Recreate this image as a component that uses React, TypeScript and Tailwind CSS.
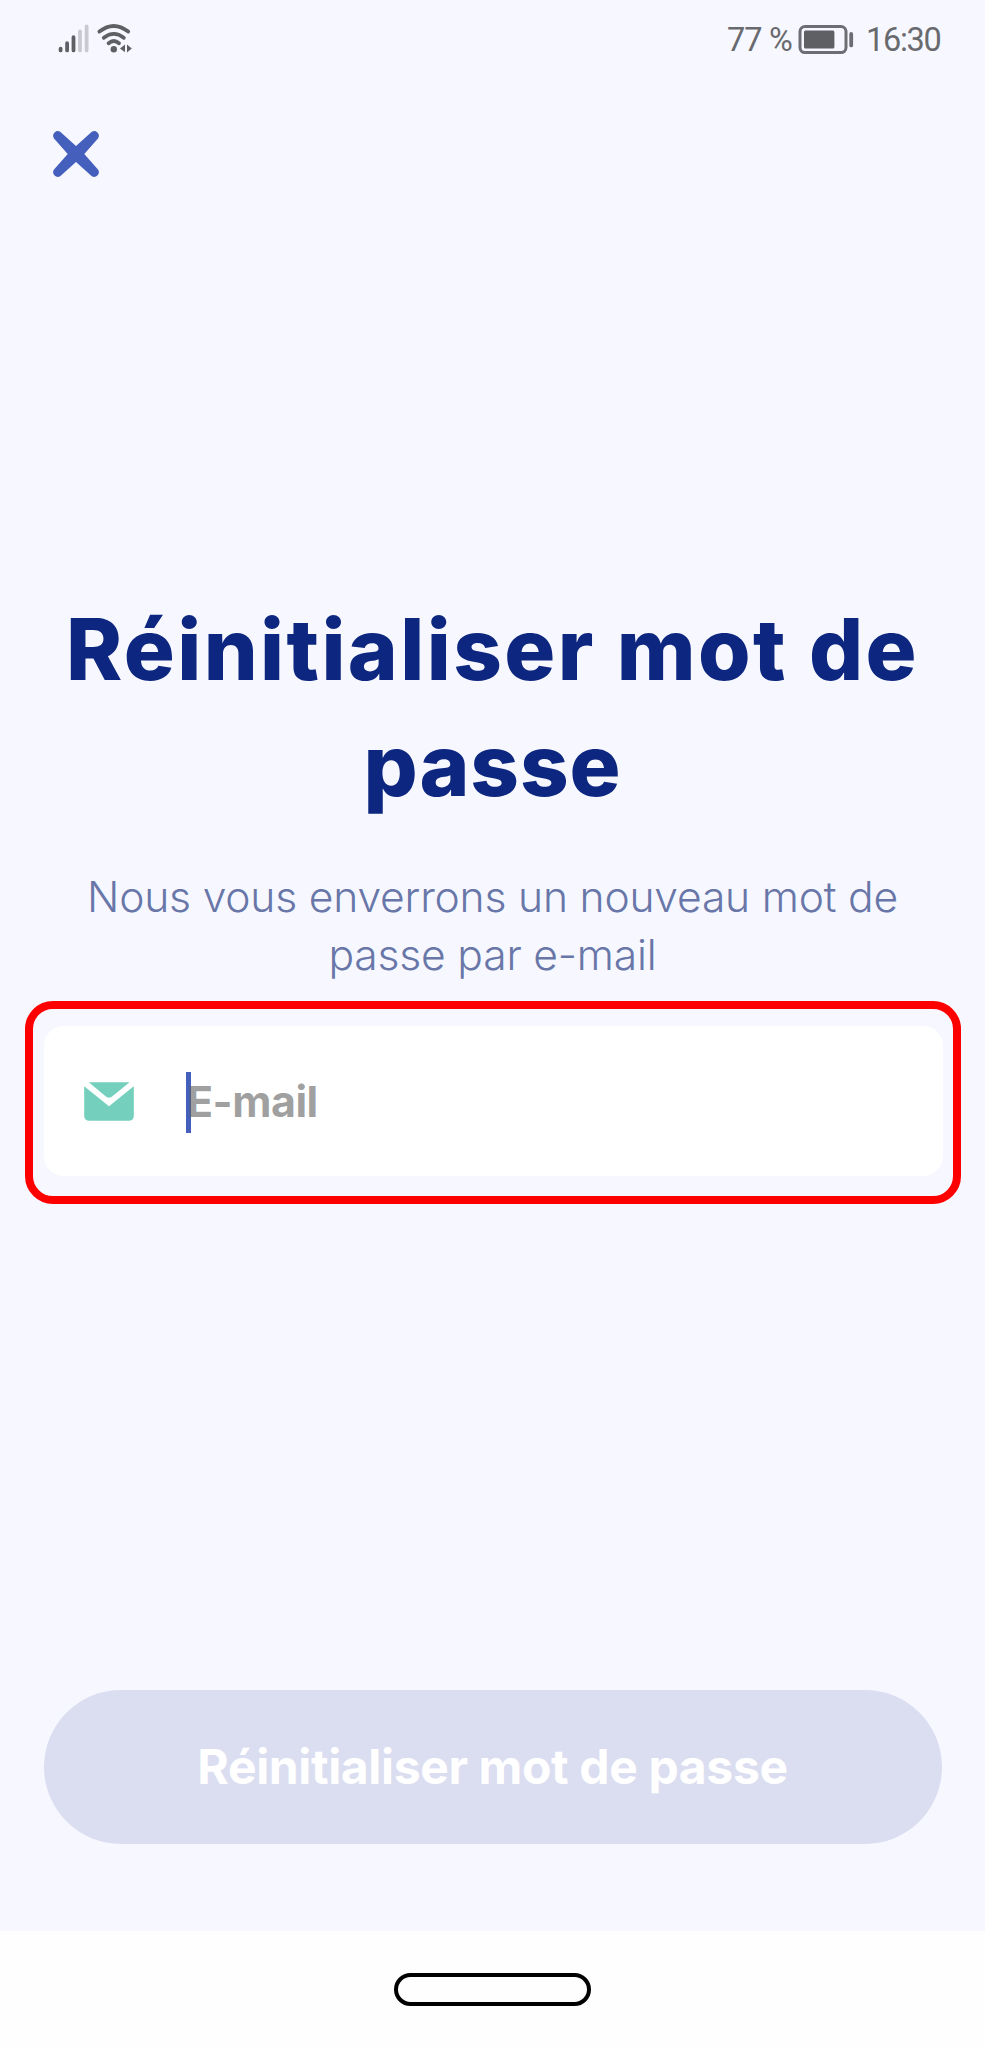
function SignalIcon() {
  return (
    <svg className="h-[60px] w-[96px]" viewBox="40 10 96 60" fill="none" strokeLinecap="round">
      <g stroke="#5f6064" strokeWidth="3.8">
        <path d="M60.6 48.6V50.4M67.1 43.2V50.4M73.5 37.2V50.4" />
        <path d="M80 31.4V50.4M86.6 26.4V50.4" stroke="#c9cad0" />
      </g>
      <g stroke="#5f6064" strokeWidth="3.8">
        <path d="M99.4 31.6Q113.7 20.4 128.2 31.6" />
        <path d="M103.8 37.8Q113.8 30 123.8 37.8" />
        <path d="M108.6 43.2Q113.8 38.8 119 43.2" />
      </g>
      <circle cx="113.8" cy="49.2" r="3.2" fill="#5f6064" />
      <path d="M120 48.6L125 44.6V52.2ZM131.8 48.4L127 44.6V52.4Z" fill="#5f6064" />
    </svg>
  );
}

function BatteryIcon() {
  return (
    <svg className="h-[32px] w-[58px]" viewBox="798 22 58 32" fill="none">
      <rect x="801" y="25.6" width="46" height="26" rx="5" stroke="#6d6e73" strokeWidth="3" />
      <rect x="805" y="29.6" width="30.4" height="18" rx="1.5" fill="#5f6064" />
      <path d="M852.2 33V44.4" stroke="#6d6e73" strokeWidth="3.8" strokeLinecap="round" />
    </svg>
  );
}

function CloseIcon() {
  return (
    <svg className="size-[48px]" viewBox="-24 -24 48 48" fill="#455fbd">
      <path d="M0-8L15.8-22.2A4.7 4.7 0 0 1 22.2-15.8L8.3 0L22.2 15.8A4.7 4.7 0 0 1 15.8 22.2L0 8L-15.8 22.2A4.7 4.7 0 0 1-22.2 15.8L-8.3 0L-22.2-15.8A4.7 4.7 0 0 1-15.8-22.2Z" />
    </svg>
  );
}

function MailIcon() {
  return (
    <svg className="h-[39px] w-[50px]" viewBox="0 0 50 39" fill="#74d0bd">
      <path d="M4.8 0.3H45.6L29 13.8Q25 17.8 21 13.8Z" />
      <path d="M0.2 4.2L25 24.2L49.8 4.2V33.5Q49.8 38.8 44.5 38.8H5.5Q0.2 38.8 0.2 33.5Z" />
    </svg>
  );
}

export default function App() {
  return (
    <div className="flex h-[2048px] w-[985px] flex-col bg-[#f7f8ff] font-['Inter',sans-serif]">
      <header className="flex h-[80px] shrink-0 items-start justify-between pr-[43px] pl-[40px] pt-[10px]">
        <SignalIcon />
        <div className="mt-[9px] flex h-10 items-center font-['Roboto',sans-serif] text-[32.5px] whitespace-nowrap text-[#696a6e]">
          <span className="mt-[2px] w-[70px] tracking-[-0.9px]">77 %</span>
          <BatteryIcon />
          <span className="mt-[2px] ml-[11px] w-[76px] tracking-[-1.3px]">16:30</span>
        </div>
      </header>
      <button className="mt-[50px] ml-[52px] size-[48px] shrink-0" aria-label="Fermer">
        <CloseIcon />
      </button>

      <main className="flex flex-col px-[25px] pt-[414px]">
        <h1 className="text-center text-[85px] leading-[116px] font-extrabold text-[#0d267f]">
          <span className="tracking-[2.4px]">Réinitialiser mot de</span>
          <br />
          <span className="tracking-[0.9px]">passe</span>
        </h1>
        <p className="mt-[44px] text-center text-[42.6px] leading-[58px] font-light tracking-[-0.2px] text-[#6876a8]">
          Nous vous enverrons un nouveau mot de<br />passe par e-mail
        </p>
        <div className="mt-[17px] h-[203px] w-[936px] rounded-[28px] border-8 border-[#ff0000] px-[10.5px] pt-[17px]">
          <label className="flex h-[150px] items-center rounded-[20px] bg-white pl-[40.5px]">
            <MailIcon />
            <span className="mt-[3px] ml-[52px] h-[61px] w-[5px] bg-[#455fbd]" />
            <span className="-ml-[4px] text-[43px] font-bold tracking-[-0.5px] text-[#5f5f5f]/60">E-mail</span>
          </label>
        </div>
        <button className="mx-[18.5px] mt-[486px] h-[154px] rounded-full bg-[#dbdef0] text-[48px] font-bold tracking-[-0.36px] text-white">
          Réinitialiser mot de passe
        </button>
      </main>

      <nav className="mt-auto flex h-[117px] shrink-0 justify-center bg-[#fefefe] pt-[42px]">
        <div className="h-[33px] w-[197px] rounded-full border-4 border-black" />
      </nav>
    </div>
  );
}
